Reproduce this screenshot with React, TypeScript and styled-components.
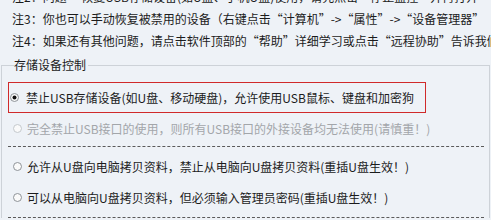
import React from 'react';
import styled, { createGlobalStyle } from 'styled-components';

const GlobalStyle = createGlobalStyle`
  html, body {
    margin: 0;
    padding: 0;
    background: #eef2f7;
    overflow: hidden;
  }
  body {
    font-family: "Noto Sans CJK SC", "Noto Sans", sans-serif;
    font-size: 12px;
    color: #1c1c1c;
  }
`;

const Page = styled.div`
  width: 491px;
  height: 220px;
  overflow: hidden;
  background: #eef2f7;
`;

const Notes = styled.div`
  margin-top: -14px;
  padding-left: 12px;
  white-space: nowrap;
`;

const NoteLine = styled.div`
  height: 22px;
  line-height: 22px;
`;

const Group = styled.fieldset`
  margin: 5px 1px 0 1px;
  padding: 9px 3px 0 6px;
  border: 1px solid #cdd2d8;
  border-bottom: none;
  min-width: 0;
`;

const Legend = styled.legend`
  padding: 0 2px 0 0;
  margin-left: 6px;
  font-size: 12px;
  line-height: 16px;
  color: #1c1c1c;
`;

const Highlight = styled.div`
  height: 29px;
  width: 415px;
  border: 1px solid #d02a2a;
  display: flex;
  align-items: center;
  gap: 7px;
  padding-left: 1px;
  white-space: nowrap;
`;

const Row = styled.div<{ disabled?: boolean; top?: number }>`
  height: 31px;
  margin-top: ${({ top }) => top || 0}px;
  display: flex;
  align-items: center;
  gap: 5px;
  padding-left: 5px;
  white-space: nowrap;
  color: ${({ disabled }) => (disabled ? '#a3a6aa' : '#1c1c1c')};
`;

const Dashed = styled.div<{ top: number }>`
  margin-top: ${({ top }) => top}px;
  margin-right: 2px;
  border-top: 1px dashed #5a5a5a;
`;

const Radio = ({ checked, disabled }: { checked?: boolean; disabled?: boolean }) => (
  <svg width="9" height="9" viewBox="0 0 9 9">
    <circle
      cx="4.5"
      cy="4.5"
      r="4"
      fill="#fafafa"
      stroke={disabled ? '#c4c8cc' : '#8e9398'}
      strokeWidth="1"
    />
    {checked && <circle cx="4.5" cy="4.5" r="2" fill="#111" />}
  </svg>
);

const App = () => (
  <Page>
    <GlobalStyle />
    <Notes>
      <NoteLine>注2：问题一 恢复USB存储设备(如U盘、手机U盘)使用，请先点击“停止监控”并再打开</NoteLine>
      <NoteLine>注3：你也可以手动恢复被禁用的设备（右键点击“计算机”-&gt;“属性”-&gt;“设备管理器”</NoteLine>
      <NoteLine>注4：如果还有其他问题，请点击软件顶部的“帮助”详细学习或点击“远程协助”告诉我们</NoteLine>
    </Notes>
    <Group>
      <Legend>存储设备控制</Legend>
      <Highlight>
        <Radio checked />
        <span>禁止USB存储设备(如U盘、移动硬盘)，允许使用USB鼠标、键盘和加密狗</span>
      </Highlight>
      <Row disabled>
        <Radio disabled />
        <span>完全禁止USB接口的使用，则所有USB接口的外接设备均无法使用(请慎重！)</span>
      </Row>
      <Dashed top={2} />
      <Row top={4}>
        <Radio />
        <span>允许从U盘向电脑拷贝资料，禁止从电脑向U盘拷贝资料(重插U盘生效！)</span>
      </Row>
      <Row>
        <Radio />
        <span>可以从电脑向U盘拷贝资料，但必须输入管理员密码(重插U盘生效！)</span>
      </Row>
      <Dashed top={4} />
    </Group>
  </Page>
);

export default App;
